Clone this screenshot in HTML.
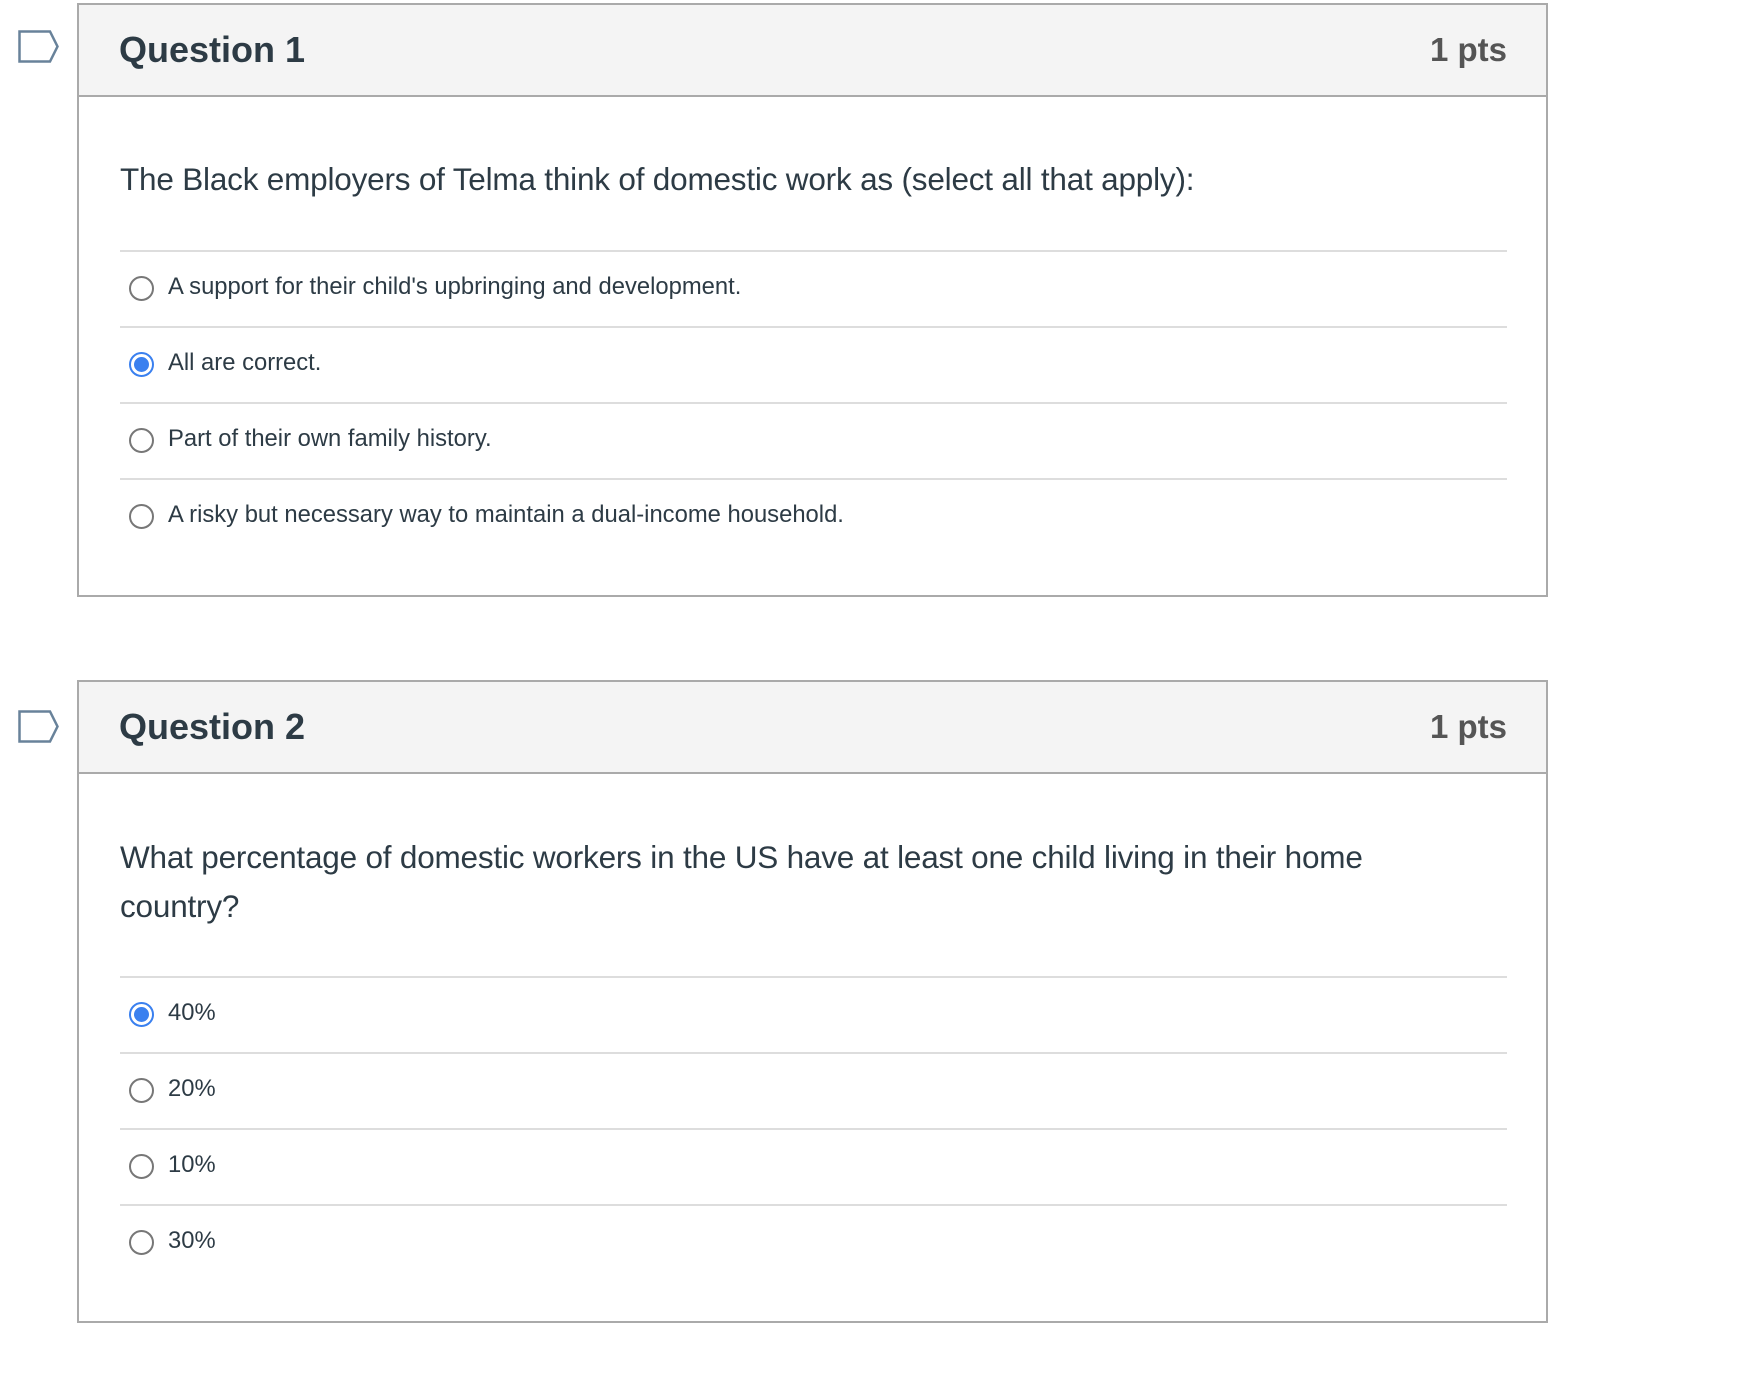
<!DOCTYPE html>
<html><head><style>
body{margin:0;background:#fff;width:1748px;height:1388px;position:relative;font-family:"Liberation Sans",sans-serif;color:#2d3b45;overflow:hidden}
.box{position:absolute;left:77px;width:1467px;border:2px solid #aaa;background:#fff}
.hd{height:90px;background:#f4f4f4;border-bottom:2px solid #aaa;position:relative}
.hd .q{position:absolute;left:40px;top:0;line-height:90px;font-size:36px;font-weight:bold;color:#2d3b45}
.hd .p{position:absolute;right:39px;top:0;line-height:90px;font-size:33px;font-weight:bold;color:#555}
.txt{position:absolute;left:41px;font-size:31.5px;letter-spacing:-0.2px}
.div{position:absolute;left:41px;width:1387px;height:2px;background:#ddd}
.opt{position:absolute;left:41px;font-size:23.8px;height:30px;line-height:30px}
.r{position:absolute;left:9px;top:4px;border:2px solid #777;border-radius:50%;box-sizing:border-box;width:25px;height:25px}
.r.on{border:2px solid #3a80ef}
.r.on::after{content:"";position:absolute;left:3px;top:3px;width:15px;height:15px;border-radius:50%;background:#3a80ef}
.opt span{position:absolute;left:48px;white-space:nowrap}
.ic{position:absolute;left:18px}
</style></head><body>
<svg class="ic" style="top:30px" width="42" height="33" viewBox="0 0 42 33"><path d="M1.5 1.5H32L39.5 16.5L32 31.5H1.5Z" fill="none" stroke="#68829a" stroke-width="2.5"/></svg>
<svg class="ic" style="top:710px" width="42" height="33" viewBox="0 0 42 33"><path d="M1.5 1.5H32L39.5 16.5L32 31.5H1.5Z" fill="none" stroke="#68829a" stroke-width="2.5"/></svg>

<div class="box" style="top:3px;height:590px">
<div class="hd"><div class="q">Question 1</div><div class="p">1 pts</div></div>
<div class="txt" style="top:156px">The Black employers of Telma think of domestic work as (select all that apply):</div>
<div class="div" style="top:245px"></div>
<div class="opt" style="top:267px"><div class="r"></div><span>A support for their child's upbringing and development.</span></div>
<div class="div" style="top:321px"></div>
<div class="opt" style="top:343px"><div class="r on"></div><span>All are correct.</span></div>
<div class="div" style="top:397px"></div>
<div class="opt" style="top:419px"><div class="r"></div><span>Part of their own family history.</span></div>
<div class="div" style="top:473px"></div>
<div class="opt" style="top:495px"><div class="r"></div><span>A risky but necessary way to maintain a dual-income household.</span></div>
</div>

<div class="box" style="top:680px;height:639px">
<div class="hd"><div class="q">Question 2</div><div class="p">1 pts</div></div>
<div class="txt" style="top:151px;line-height:49px;width:1420px">What percentage of domestic workers in the US have at least one child living in their home<br>country?</div>
<div class="div" style="top:294px"></div>
<div class="opt" style="top:316px"><div class="r on"></div><span>40%</span></div>
<div class="div" style="top:370px"></div>
<div class="opt" style="top:392px"><div class="r"></div><span>20%</span></div>
<div class="div" style="top:446px"></div>
<div class="opt" style="top:468px"><div class="r"></div><span>10%</span></div>
<div class="div" style="top:522px"></div>
<div class="opt" style="top:544px"><div class="r"></div><span>30%</span></div>
</div>
</body></html>
